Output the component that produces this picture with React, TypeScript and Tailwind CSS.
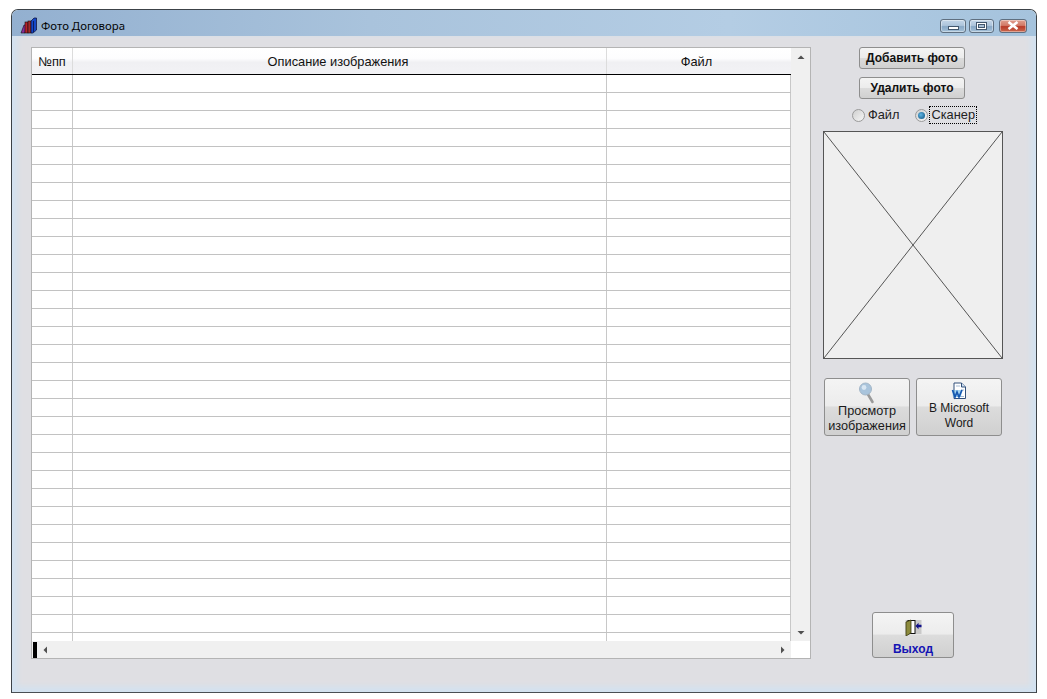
import React from "react";

const arial = "font-['Liberation_Sans',Arial,sans-serif]";
const gloss = "bg-[linear-gradient(#f4f4f4_0%,#ececec_48%,#dcdcdc_50%,#d0d0d0_100%)]";

function Books() {
  return (
    <svg width="17" height="17" viewBox="0 0 17 17" className="shrink-0">
      <path d="M1 16 L4 8 L6 8 L5 16 Z" fill="#8a2c9c" stroke="#111" strokeWidth="0.6" />
      <rect x="5" y="5" width="3" height="11" fill="#b5222a" stroke="#111" strokeWidth="0.6" />
      <rect x="8" y="4" width="3" height="12" fill="#a52a2a" stroke="#111" strokeWidth="0.6" />
      <path d="M11 4 L14 1 L16.5 1 L16.5 13 L13 16 L11 16 Z" fill="#1448c8" stroke="#0a0a30" strokeWidth="0.7" />
      <path d="M13.5 4 V15" stroke="#0a0a30" strokeWidth="0.7" />
    </svg>
  );
}

function Magnifier() {
  return (
    <svg width="16" height="22" viewBox="0 0 16 22">
      <path d="M8.5 11.5 L13.5 20" stroke="#9a9a9a" strokeWidth="2.6" strokeLinecap="round" />
      <circle cx="6.5" cy="7" r="6" fill="#a9c4dc" stroke="#a3b6c7" strokeWidth="1" />
      <circle cx="5" cy="5.5" r="2.4" fill="#d8e6f2" />
    </svg>
  );
}

function WordDoc() {
  return (
    <svg width="16" height="18" viewBox="0 0 16 18">
      <path d="M3 1 H10.5 L14.5 5 V16.5 H3 Z" fill="#fff" stroke="#33507a" strokeWidth="1" />
      <path d="M10.5 1 V5 H14.5" fill="#cfe0f2" stroke="#33507a" strokeWidth="1" />
      <path d="M5 4 H9 M6 14.5 H13 M10 8 H13" stroke="#8fa8c6" strokeWidth="0.8" />
      <path d="M1 8 H11 L10 15 H2 Z" fill="#58b0e8" opacity="0.55" />
      <path d="M1.5 8 L4 15 L6 10 L8 15 L11 8" fill="none" stroke="#1557b0" strokeWidth="1.7" />
    </svg>
  );
}

function Door() {
  return (
    <svg width="17" height="17" viewBox="0 0 17 17">
      <rect x="0.5" y="1" width="16" height="14" fill="#c9c9c9" />
      <rect x="3" y="1.5" width="7" height="13" fill="#fff" stroke="#111" strokeWidth="1" />
      <path d="M1 3 L6 1 V14 L1 17 Z" fill="#8c8a3c" stroke="#3a3a10" strokeWidth="0.8" />
      <path d="M10.5 7 L13.5 3.8 V5.8 H16.5 V8.2 H13.5 V10.2 Z" fill="#10108a" />
    </svg>
  );
}

function CaptionButton({ kind }: { kind: "min" | "max" | "close" }) {
  const bg =
    kind === "close"
      ? "bg-[linear-gradient(#e0a090_0%,#d27a68_45%,#b83a28_55%,#c96a50_100%)] w-[28px] ml-[2px]"
      : kind === "max"
        ? "bg-[linear-gradient(#c4d6e8_0%,#aec5dc_45%,#88a8c6_55%,#a4c0d8_100%)] w-[25px]"
        : "bg-[linear-gradient(#c4d6e8_0%,#aec5dc_45%,#88a8c6_55%,#a4c0d8_100%)] w-[26px]";
  return (
    <div className={`${bg} h-[14px] rounded-[3px] border border-[#5f6f80] shadow-[inset_0_0_0_1px_rgba(255,255,255,0.4)] flex items-center justify-center`}>
      {kind === "min" && <div className="mt-[5px] w-[11px] h-[4px] bg-white border border-[#44586e]" />}
      {kind === "max" && (
        <div className="w-[11px] h-[8px] bg-white border border-[#44586e] flex items-center justify-center">
          <div className="w-[7px] h-[4px] bg-[#a9c0d6] border border-[#44586e]" />
        </div>
      )}
      {kind === "close" && (
        <svg width="14" height="9" viewBox="0 0 14 9">
          <path d="M2.5 1 L11.5 8 M11.5 1 L2.5 8" stroke="#fff" strokeWidth="2.6" />
        </svg>
      )}
    </div>
  );
}

function TopButton({ label, className }: { label: string; className: string }) {
  return (
    <div className={`${gloss} ${className} w-[106px] h-[22px] rounded-[3px] border border-[#8e8e8e] flex items-center justify-center text-[12px] font-bold text-[#111]`}>
      {label}
    </div>
  );
}

function Radio({ checked }: { checked?: boolean }) {
  return (
    <div className="w-[13px] h-[13px] rounded-full border border-[#9a9a9a] bg-[linear-gradient(135deg,#cfcfcf,#f6f6f6)] flex items-center justify-center">
      {checked && <div className="w-[7px] h-[7px] rounded-full bg-[radial-gradient(circle_at_40%_40%,#5fb4e2,#0b4f7e)]" />}
    </div>
  );
}

function Row() {
  return (
    <div className="flex h-[18px] shrink-0 border-b border-[#c2c2c2]">
      <div className="w-[41px] border-r border-[#c8c8c8]" />
      <div className="w-[534px] border-r border-[#c8c8c8]" />
      <div className="w-[184px] border-r border-[#c8c8c8]" />
    </div>
  );
}

function Tri({ dir, className }: { dir: "up" | "down" | "left" | "right"; className?: string }) {
  const p = { up: "0.5,5 7.5,5 4,1.5", down: "0.5,1 7.5,1 4,4.5", left: "5,0.5 5,7.5 1.5,4", right: "1,0.5 1,7.5 4.5,4" }[dir];
  const w = dir === "up" || dir === "down";
  return (
    <svg width={w ? 8 : 6} height={w ? 6 : 8} viewBox={w ? "0 0 8 6" : "0 0 6 8"} className={className}>
      <polygon points={p} fill="#505050" />
    </svg>
  );
}

export default function App() {
  const rows = Array.from({ length: 32 });
  return (
    <div className={`w-[1047px] h-[699px] bg-white pt-[9px] pl-[11px] overflow-hidden ${arial}`}>
      <div className="w-[1026px] h-[684px] flex flex-col rounded-t-[7px] border border-[#3c4247] border-b-[#4a4f54] overflow-hidden">
        <div className="h-[26px] shrink-0 bg-[linear-gradient(90deg,#93b0d0_0%,#a9c3dc_35%,#b4cde4_70%,#a5c3dd_100%)] flex items-center pt-[4px] pl-[8px] pr-[9px]">
          <Books />
          <span className="ml-[4px] mt-[1px] text-[11.4px] text-[#050505] font-['Noto_Sans',sans-serif]">Фото Договора</span>
          <div className="ml-auto flex gap-[3px] mt-[1px]">
            <CaptionButton kind="min" />
            <CaptionButton kind="max" />
            <CaptionButton kind="close" />
          </div>
        </div>
        <div className="flex-1 flex bg-[#dfdfe3] pl-[19px] pt-[11px] shadow-[inset_8px_0_6px_-3px_#d2e2f1,inset_-8px_0_6px_-3px_#d2e2f1,inset_0_-8px_6px_-3px_#d2e2f1]">
          <div className="w-[780px] h-[612px] border border-[#b4b4b4] bg-white flex flex-col shrink-0">
            <div className="flex flex-1 min-h-0">
              <div className="w-[759px] flex flex-col overflow-hidden">
                <div className="h-[27px] shrink-0 flex border-b border-black bg-[linear-gradient(#ffffff_0%,#fdfdfe_40%,#f0f0f3_55%,#f2f2f5_100%)] text-[12.8px] text-[#111]">
                  <div className="w-[41px] border-r border-[#dcdcdc] flex items-center justify-center pt-[1px]">№пп</div>
                  <div className="w-[534px] border-r border-[#dcdcdc] flex items-center justify-center pt-[1px] pr-[3px]">Описание изображения</div>
                  <div className="w-[184px] flex items-center justify-center pt-[1px] pr-[5px]">Файл</div>
                </div>
                {rows.map((_, i) => (
                  <Row key={i} />
                ))}
              </div>
              <div className="w-[19px] bg-[#f0f0f0] flex flex-col items-center justify-between pt-[6px] pb-[5px]">
                <Tri dir="up" />
                <Tri dir="down" />
              </div>
            </div>
            <div className="h-[17px] shrink-0 flex">
              <div className="w-[759px] bg-[#f0f0f0] flex items-center pl-[1px] pr-[5px]">
                <div className="w-[4px] h-[16px] bg-black" />
                <Tri dir="left" className="ml-[5px]" />
                <Tri dir="right" className="ml-auto" />
              </div>
            </div>
          </div>

          <div className="ml-[12px] w-[180px] flex flex-col items-center">
            <TopButton label="Добавить фото" className="mr-[2px]" />
            <TopButton label="Удалить фото" className="mt-[8px] mr-[2px]" />
            <div className="mt-[7px] w-full flex items-center text-[12.8px] text-[#222] h-[18px] pl-[29px]">
              <Radio />
              <span className="ml-[3px]">Файл</span>
              <div className="ml-[16px]"><Radio checked /></div>
              <span className="ml-[1px] border border-dotted border-black px-[1px] leading-[16px]">Сканер</span>
            </div>
            <div className="mt-[7px] w-[180px] h-[228px] border border-[#555] bg-[#efefef]">
              <svg width="178" height="226" viewBox="0 0 178 226" className="block">
                <path d="M0 0 L178 226 M178 0 L0 226" stroke="#555" strokeWidth="1" fill="none" />
              </svg>
            </div>
            <div className="mt-[19px] flex gap-[6px] text-[#1a1a1a] text-center">
              <div className={`${gloss} w-[86px] h-[58px] rounded-[3px] border border-[#8e8e8e] flex flex-col items-center pt-[3px] leading-[15px] text-[12.7px]`}>
                <Magnifier />
                <span>Просмотр</span>
                <span>изображения</span>
              </div>
              <div className={`${gloss} w-[86px] h-[58px] rounded-[3px] border border-[#8e8e8e] flex flex-col items-center pt-[3px] leading-[15px] text-[12px]`}>
                <WordDoc />
                <span className="mt-[1px]">В Microsoft</span>
                <span>Word</span>
              </div>
            </div>
            <div className={`${gloss} mt-[176px] w-[82px] h-[46px] rounded-[3px] border border-[#8e8e8e] flex flex-col items-center pt-[6px]`}>
              <Door />
              <span className="mt-[6px] text-[12px] font-bold text-[#1414b4] leading-[14px]">Выход</span>
            </div>
          </div>
        </div>
      </div>
    </div>
  );
}
